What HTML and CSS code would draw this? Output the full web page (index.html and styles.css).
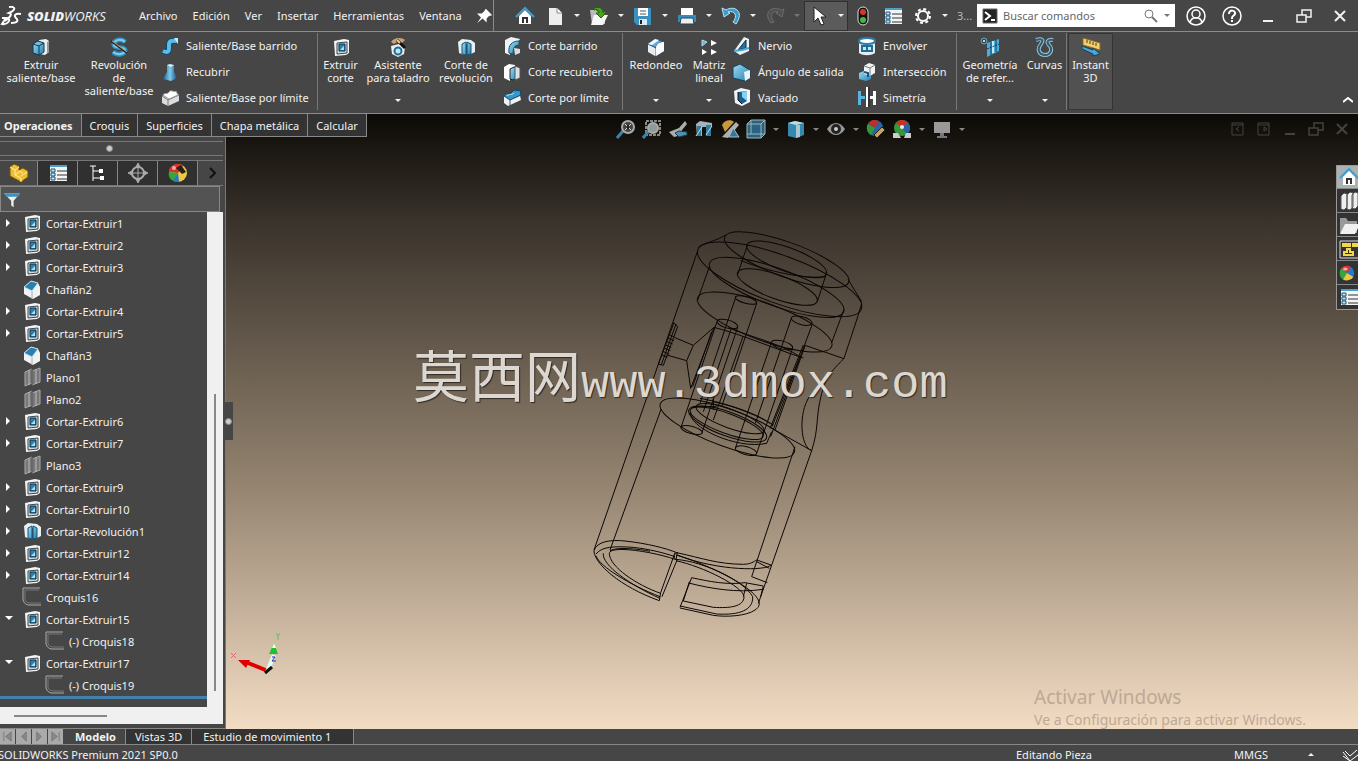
FILE: index.html
```html
<!DOCTYPE html>
<html lang="es">
<head>
<meta charset="utf-8">
<title>SOLIDWORKS Premium 2021</title>
<link rel="stylesheet" href="styles.css">
</head>
<body>
<svg class="defs" aria-hidden="true">
  <linearGradient id="blue" x1="0" y1="0" x2="1" y2="1"><stop offset="0" stop-color="#9bdcf5"/><stop offset="1" stop-color="#2583b5"/></linearGradient>
  <linearGradient id="tube"><stop offset="0" stop-color="#1c5f8a"/><stop offset=".5" stop-color="#7ccbee"/><stop offset="1" stop-color="#17547c"/></linearGradient>
  <symbol id="extrude" viewBox="0 0 20 20"><path d="M8 3l7-1 3 2v11l-4 3-5-1z" fill="#e9eef0"/><path d="M16 5v11l2-1V4z" fill="#999"/><path d="M2 7l5-3 6 2v9l-5 3-6-2z" fill="url(#blue)" stroke="#12384f"/><path d="M2 7l6 2 5-3M8 9v9" fill="none" stroke="#12384f"/></symbol>
  <symbol id="revolve" viewBox="0 0 20 20"><path d="M16 5C12 1 4 3 5 8c1 4 10 1 11 5 0 4-7 6-12 2" fill="none" stroke="#2f8fc2" stroke-width="5"/><path d="M16 5C12 1 4 3 5 8c1 4 10 1 11 5 0 4-7 6-12 2" fill="none" stroke="#7fcdf0" stroke-width="2"/><path d="M2 4l16 12" stroke="#222" stroke-width="2"/><path d="M3 4l15 11" stroke="#c99b67"/></symbol>
  <symbol id="sweep" viewBox="0 0 20 20"><path d="M3 15c7 3 6-2 6-6s2-5 8-4" fill="none" stroke="#0e4a70" stroke-width="6"/><path d="M3 15c7 3 6-2 6-6s2-5 8-4" fill="none" stroke="#5cbce8" stroke-width="4"/><path d="M14 2h4v6" fill="#c4ecfb"/></symbol>
  <symbol id="loft" viewBox="0 0 20 20"><path d="M7 3h7v7l3 6-6 3-8-2 4-7z" fill="url(#tube)"/><path d="M7 3l3-1 4 1-3 2z" fill="#d5f1fc"/></symbol>
  <symbol id="boundary" viewBox="0 0 20 20"><path d="M2 9l11-5 6 4v6L8 19l-6-3z" fill="#ddd"/><path d="M2 9l6 4 11-5M8 13v6" fill="none" stroke="#777"/><path d="M3 8c2-3 4 0 6-3s5 1 7-1l2 4-9 4z" fill="#fff" stroke="#999"/></symbol>
  <symbol id="cutext" viewBox="0 0 20 20"><path d="M3 4l10-2 5 1v13l-3 2-11 1z" fill="#f1f4f5"/><path d="M6 6l10-1v11L6 17z" fill="#d3dadd" stroke="#39464d"/><path d="M8 7h6v7H8z" fill="#2d80ad" stroke="#0c3047"/><path d="M9 13l4-4v4z" fill="#a9e2f8"/></symbol>
  <symbol id="wizard" viewBox="0 0 20 20"><path d="M3 9l8-2 6 3-1 7-6 3-6-3z" fill="#eef1f2"/><circle cx="10" cy="14" r="3.500" fill="#b9e7f8" stroke="#1f6d99" stroke-width="2"/><path d="M3 5c3-5 11-5 14-2l-3 3c-3-2-6-1-8 1z" fill="#c9a083"/><path d="M9 3l8 8" stroke="#111" stroke-width="3"/><path d="M9 3l3 3" stroke="#e8d18c" stroke-width="2"/></symbol>
  <symbol id="cutrev" viewBox="0 0 20 20"><path d="M2 5l4-3 9 1 4 3v9l-4 2V8l-4-1-3 1v10l-5-2z" fill="#e9f0f2"/><path d="M6 7l4-2v13l-4-1zM11 5l4 2v10l-4 1z" fill="url(#blue)" stroke="#155377"/></symbol>
  <symbol id="cutsweep" viewBox="0 0 20 20"><path d="M3 4l6-3 9 2-2 3-8 5v8l-5-2z" fill="#eef2f4"/><path d="M7 17C6 9 10 5 17 5v4c-5 0-6 4-6 9z" fill="url(#blue)" stroke="#17547c"/><path d="M12 12l6 1v4l-5 2z" fill="#d8dee0"/></symbol>
  <symbol id="cutloft" viewBox="0 0 20 20"><path d="M2 5l5-3 6 1v3L8 8v11l-6-3z" fill="#fff"/><path d="M8 7l4-2 4 1v9l-5 3-3-1z" fill="url(#blue)" stroke="#222"/><path d="M13 4l5 2v10l-5 2z" fill="#dce3e5" stroke="#555"/></symbol>
  <symbol id="cutbound" viewBox="0 0 20 20"><path d="M2 9l15-5 2 9L6 19l-4-3z" fill="#edf4f7"/><path d="M2 9c3-5 5 0 8-4s5 0 8-2l1 5L8 13z" fill="#3796c9" stroke="#134563"/><path d="M5 9c3-3 4 0 7-3" fill="none" stroke="#bfe8f8"/><path d="M8 13v6" stroke="#456"/></symbol>
  <symbol id="fillet" viewBox="0 0 20 20"><path d="M2 7l7-5 9 3v9l-9 5-7-4z" fill="#e9eced"/><path d="M2 7l8 3v9" fill="none" stroke="#667"/><path d="M10 11c0-4 4-6 8-6l-9-3-7 5z" fill="url(#blue)" stroke="#1b5a80"/><path d="M2 7l7-5 4 1-7 5z" fill="#f6f8f9"/><path d="M10 11c0-4 4-6 8-6v9l-8 5z" fill="#f9fbfc"/></symbol>
  <symbol id="pattern" viewBox="0 0 20 20"><path d="M3 3l5 2-5 4z" fill="#62b8e3" stroke="#b9d8e6"/><path d="M12 3l6 3-6 3zM3 12l5 3-5 3zM12 12l6 3-6 3z" fill="#fff"/></symbol>
  <symbol id="rib" viewBox="0 0 20 20"><path d="M2 15L12 1l5 2v12l-9 4z" fill="#e8f3f8"/><path d="M6 14l8-10v8z" fill="#286f99" stroke="#0f3348"/><path d="M2 15l8-1 7-2" fill="none" stroke="#4ba7d6" stroke-width="2"/></symbol>
  <symbol id="draft" viewBox="0 0 20 20"><path d="M1 5l7-3 10 6v8l-5 3-12-3z" fill="url(#blue)" stroke="#183f55"/><path d="M12 10l6-2v8l-5 3z" fill="#edf2f4"/></symbol>
  <symbol id="shell" viewBox="0 0 20 20"><path d="M2 4l7-3 9 2v12l-8 4-7-3z" fill="#f1f5f7"/><path d="M6 5l9-1v10l-5 3-4-4z" fill="#1a5f89"/><path d="M10 5l5-1v10l-5-4z" fill="#84d1f2"/><path d="M6 5v8l4 4" fill="none" stroke="#111"/></symbol>
  <symbol id="wrap" viewBox="0 0 20 20"><path d="M2 5v12c4 3 12 3 16 0V5z" fill="#e4eef2"/><ellipse cx="10" cy="5" rx="8" ry="3" fill="#fff" stroke="#2d7da7" stroke-width="2"/><path d="M5 10h10v5H5zM10 10v5" fill="#c4eafa" stroke="#206d98" stroke-width="2"/></symbol>
  <symbol id="intersect" viewBox="0 0 20 20"><path d="M2 11l5-2 7 3v5l-5 2-7-2z" fill="url(#blue)"/><path d="M7 4l5-3 6 2v8l-5 3-6-2z" fill="#f3f4f4"/><path d="M7 4l6 2 5-3M13 6v8" stroke="#777" fill="none"/><path d="M7 10l4 1v4" fill="none" stroke="#185378" stroke-width="2"/></symbol>
  <symbol id="mirror" viewBox="0 0 20 20"><path d="M1 4h3v5h4v3H4v6H1z" fill="#58b3e0"/><path d="M10 0v20" stroke="#fff" stroke-width="2"/><path d="M12 0v20" stroke="#222"/><path d="M19 4h-3v5h-3v3h3v6h3z" fill="#fff"/></symbol>
  <symbol id="geometry" viewBox="0 0 20 20"><circle cx="4" cy="4" r="3" fill="none" stroke="#56acd6"/><circle cx="4" cy="4" r="1" fill="#fff"/><path d="M7 6l12-4v12L7 20z" fill="#4aaee0"/><path d="M11 5v13M16 3v12" stroke="#173b50"/><path d="M13 4v12" stroke="#bfeaff" stroke-width="2"/><path d="M7 12l12-5" stroke="#173b50" stroke-dasharray="2 1"/></symbol>
  <symbol id="curves" viewBox="0 0 20 20"><path d="M1 3c6-2 8 0 5 4-5 6-1 11 4 11 6 0 8-6 4-10-3-3-1-6 4-5" fill="none" stroke="#8fc2da" stroke-width="4"/><path d="M1 3c6-2 8 0 5 4-5 6-1 11 4 11 6 0 8-6 4-10-3-3-1-6 4-5" fill="none" stroke="#38596a" stroke-width="2"/></symbol>
  <symbol id="ruler" viewBox="0 0 20 20"><path d="M2 1l17 5v7L2 8z" fill="#f3cf72" stroke="#8b6d25"/><path d="M6 3v3M9 4v3M12 5v3M15 6v3" stroke="#4c3a10"/><path d="M1 9l11 4v-2l7 6-7 2v-2L1 12z" fill="#4aa5d8" stroke="#17405c"/></symbol>
  <symbol id="home" viewBox="0 0 20 20"><path d="M4 10v8h12v-8l-6-6z" fill="#fff"/><path d="M1 11l9-9 9 9" fill="none" stroke="#3f9fd0" stroke-width="2"/><path d="M8 17v-5h4v5" fill="none" stroke="#333" stroke-width="2"/></symbol>
  <symbol id="new" viewBox="0 0 20 20"><path d="M4 2h8l5 5v12H4z" fill="#eee"/><path d="M12 2v5h5" fill="#fff" stroke="#888"/></symbol>
  <symbol id="open" viewBox="0 0 20 20"><path d="M1 4h6l2 2h7v12H3z" fill="#bbb"/><path d="M5 9h14l-5 10H2z" fill="#f8f8f8"/><path d="M5 2c6-2 9 1 9 5h3l-5 5-5-5h3C10 4 8 3 5 4z" fill="#46a51a" stroke="#206509"/></symbol>
  <symbol id="save" viewBox="0 0 20 20"><path d="M1 2h17v17H4l-3-3z" fill="#3c90bd"/><path d="M5 2h10v8H5z" fill="#fff"/><path d="M7 5h6M7 8h6" stroke="#555"/><path d="M6 13h8v6H6z" fill="#d8ecf5"/><path d="M8 14v4" stroke="#222" stroke-width="2"/></symbol>
  <symbol id="print" viewBox="0 0 20 20"><path d="M4 2h12v7H4z" fill="#fff"/><path d="M1 9h18v7H1z" fill="#328cbf"/><path d="M4 12h12l1 6H3z" fill="#eee" stroke="#26465a"/></symbol>
  <symbol id="undo" viewBox="0 0 20 20"><path d="M1 2l2 9 6-4-2-1c7-2 10 4 5 10l3 2C24 5 13-1 5 4z" fill="#3d9acb" stroke="#b8e4f7"/></symbol>
  <symbol id="redo" viewBox="0 0 20 20"><path d="M19 3l-2 8-6-4 2-1C7 4 4 10 9 16l-3 1C-3 6 8-1 16 4z" fill="#515151" stroke="#6c6c6c"/></symbol>
  <symbol id="cursor" viewBox="0 0 20 20"><path d="M5 1v15l4-4 3 7 3-1-3-7h5z" fill="#fff" stroke="#222"/></symbol>
  <symbol id="light" viewBox="0 0 20 20"><rect x="5" y="1" width="10" height="18" rx="5" fill="#111" stroke="#ddd"/><circle cx="10" cy="6" r="3" fill="#d7352d"/><circle cx="10" cy="14" r="3" fill="#43b943"/></symbol>
  <symbol id="props" viewBox="0 0 20 20"><path d="M2 2h17v16H2z" fill="#f4f4f4"/><path d="M2 3h17" stroke="#4c9fc9" stroke-width="2"/><path d="M9 8h10M9 12h10M9 16h10" stroke="#333"/><path d="M3 6h4v3H3zM3 10h4v3H3zM3 14h4v3H3z" fill="#bfe8fa" stroke="#1a5577"/></symbol>
  <symbol id="gear" viewBox="0 0 20 20"><circle cx="10" cy="10" r="5" fill="none" stroke="#fff" stroke-width="2"/><circle cx="10" cy="10" r="7" fill="none" stroke="#fff" stroke-width="2" stroke-dasharray="3 2.500"/></symbol>
  <symbol id="pin" viewBox="0 0 20 20"><path d="M11 1l8 8-4 1-3 3v5l-5-5-7 6 5-7-5-5h6l3-3z" fill="#fff"/></symbol>
  <symbol id="user" viewBox="0 0 20 20"><g fill="none" stroke="#fff" stroke-width="1.500"><circle cx="10" cy="10" r="9"/><circle cx="10" cy="8" r="4"/><path d="M4 17c1-7 11-7 12 0"/></g></symbol>
  <symbol id="help" viewBox="0 0 20 20"><g fill="none" stroke="#fff"><circle cx="10" cy="10" r="9" stroke-width="1.500"/><path d="M7 8c0-5 7-4 6 0-1 2-3 2-3 4v1M10 14v2" stroke-width="2"/></g></symbol>
  <symbol id="min" viewBox="0 0 20 20"><path d="M5 15h10" stroke="currentColor" stroke-width="2"/></symbol>
  <symbol id="restore" viewBox="0 0 20 20"><path d="M3 9h9v7H3zM8 9V4h9v7h-5M3 9h9" fill="none" stroke="currentColor" stroke-width="1.500"/></symbol>
  <symbol id="close" viewBox="0 0 20 20"><path d="M5 5l10 10M15 5L5 15" stroke="currentColor" stroke-width="2"/></symbol>
  <symbol id="dockl" viewBox="0 0 20 20"><path d="M4 4h11v12H4zM4 6h11M11 8l-3 2 3 2" fill="none" stroke="currentColor"/></symbol>
  <symbol id="dockr" viewBox="0 0 20 20"><path d="M4 4h11v12H4zM4 6h11M10 8l3 2-3 2z" fill="none" stroke="currentColor"/></symbol>
  <symbol id="zoomfit" viewBox="0 0 20 20"><path d="M1 19l6-7" stroke="#3d82a8" stroke-width="3"/><circle cx="12" cy="8" r="6" fill="#444" stroke="#aaa" stroke-width="2"/><path d="M9 5l6 6M9 11l6-6" stroke="#ddd"/><path d="M11 6h2v4h-2z" fill="#222"/></symbol>
  <symbol id="zoomarea" viewBox="0 0 20 20"><path d="M4 2h14v14H4z" fill="none" stroke="#888" stroke-width="2" stroke-dasharray="3 1"/><path d="M1 19l6-7" stroke="#3d82a8" stroke-width="3"/><circle cx="11" cy="9" r="5" fill="#909a9a" stroke="#aaa" stroke-width="2"/></symbol>
  <symbol id="prev" viewBox="0 0 20 20"><path d="M1 13l10-4 6-7 2 3-5 6v5l-8 2z" fill="#a9aeae"/><path d="M7 14l4-2 8 1v3l-8 2z" fill="#4c93b3" stroke="#234"/></symbol>
  <symbol id="section" viewBox="0 0 20 20"><path d="M2 5l4-3 12 2v4H8v9H3z" fill="#a7b2b5"/><path d="M3 7h4v10H3zM12 6h5v11h-5z" fill="#2c7da5"/><path d="M2 17L8 8M12 16l6-9" stroke="#bce2ef"/></symbol>
  <symbol id="dynamic" viewBox="0 0 20 20"><path d="M2 6c2-5 9-6 12-3L5 13z" fill="#c9983a"/><path d="M2 18L16 3l3 3-11 13z" fill="#b0b0b0"/><path d="M9 18l4-9 6 9z" fill="#36779a" stroke="#abc"/></symbol>
  <symbol id="viewcube" viewBox="0 0 20 20"><path d="M1 5l4-4h14v14l-4 4H1z" fill="#29637f" stroke="#9db6bd"/><path d="M1 5h14v14M15 5l4-4M5 1v14H1M5 15h14" fill="none" stroke="#9db6bd"/></symbol>
  <symbol id="display" viewBox="0 0 20 20"><path d="M2 4l7-2 9 2v12l-8 3-8-2z" fill="#3788ae"/><path d="M2 4l8 2 8-2-9-2z" fill="#bdd"/><path d="M10 6h4v12l-4 1z" fill="#a9c6d0"/></symbol>
  <symbol id="eye" viewBox="0 0 20 20"><path d="M1 10c5-8 13-8 18 0-5 8-13 8-18 0z" fill="#999"/><circle cx="10" cy="10" r="5" fill="#222"/><circle cx="10" cy="10" r="2" fill="#ccc"/></symbol>
  <symbol id="ball" viewBox="0 0 20 20"><circle cx="10" cy="10" r="9" fill="#2478cf"/><path d="M10 10L3 4C6 0 12 0 15 3z" fill="#d8322d"/><path d="M10 10L3 4c-4 5-2 11 2 14z" fill="#35a63a"/><path d="M10 10l-5 8c5 3 11 0 13-3z" fill="#edc840"/><ellipse cx="8" cy="5" rx="3" ry="2" fill="#fff" opacity=".6"/></symbol>
  <symbol id="ballpen" viewBox="0 0 20 20"><circle cx="9" cy="9" r="8" fill="#2565a8"/><path d="M9 9L2 5C4 0 11 0 13 3z" fill="#b92f2b"/><path d="M9 9L2 5c-3 4 0 10 3 11z" fill="#35963a"/><path d="M8 16l8-8 3 3-8 8z" fill="#c9a552" stroke="#222"/></symbol>
  <symbol id="ballscene" viewBox="0 0 20 20"><circle cx="10" cy="9" r="8" fill="#35963a"/><path d="M10 9L4 4c3-4 9-4 12 0z" fill="#c9302b"/><path d="M10 9l6-5c3 4 2 9-1 11z" fill="#2565a8"/><path d="M1 14h5l3 5H1zM12 19l2-5h5v5z" fill="#ccc"/><circle cx="10" cy="8" r="2" fill="#eee"/></symbol>
  <symbol id="balltab" viewBox="0 0 20 20"><circle cx="10" cy="10" r="9" fill="#edc840"/><path d="M10 10L1 9C1 1 11-1 15 3z" fill="#d8322d"/><path d="M10 10L1 9c-1 4 1 8 5 9z" fill="#35a63a"/><path d="M10 10l-5 8c2 1 4 1 6 1z" fill="#2478cf"/><path d="M8 5l5-3 5 7-4 2z" fill="#222"/><ellipse cx="6" cy="5" rx="2" ry="2" fill="#fff" opacity=".6"/></symbol>
  <symbol id="monitor" viewBox="0 0 20 20"><path d="M2 3h16v11H2z" fill="#999"/><path d="M8 14h4v3h3v2H5v-2h3z" fill="#777"/></symbol>
  <symbol id="part" viewBox="0 0 20 20"><path d="M1 4l4-3 5 2v4l4-2 5 3v6l-7 5L1 13z" fill="#efbd32" stroke="#74530a"/><path d="M1 4l5 3 4-3M6 7v5l6 3v4M6 12l4-3M12 13l6-4M10 8l4 2" fill="none" stroke="#fff0a5"/></symbol>
  <symbol id="treecfg" viewBox="0 0 20 20"><path d="M5 3v15M2 3h6M5 8h8M5 15h7" fill="none" stroke="#fff"/><path d="M11 6h4v4h-4zM12 13h4v4h-4z" fill="#fff"/></symbol>
  <symbol id="target" viewBox="0 0 20 20"><circle cx="10" cy="10" r="6" fill="none" stroke="#aaa" stroke-width="2"/><path d="M10 0l2 4H8zM20 10l-4 2V8zM10 20l-2-4h4zM0 10l4-2v4zM10 2v16M2 10h16" fill="#aaa" stroke="#aaa"/></symbol>
  <symbol id="filter" viewBox="0 0 20 20"><path d="M0 2h20l-8 9v8l-3-2v-6z" fill="#eee"/><path d="M0 2h20l-3 4H3z" fill="#3994bd"/></symbol>
  <symbol id="chamfer" viewBox="0 0 20 20"><path d="M2 8l7-6 7 2 2 4v8l-7 4-9-5z" fill="#f0f2f3"/><path d="M2 8l7-6 7 2-6 8z" fill="#2c7fac" stroke="#c2e3f0"/><path d="M10 12v8" stroke="#aaa"/></symbol>
  <symbol id="plane" viewBox="0 0 20 20"><path d="M3 5l7-3v14l-7 3zM10 4l8-3v14l-8 3z" fill="#777" stroke="#aaa"/><path d="M7 3v15M14 2v15" stroke="#bbb"/><path d="M10 2v16" stroke="#333"/></symbol>
  <symbol id="sketch" viewBox="0 0 20 20"><path d="M18 1H1v12c1 3 3 5 6 5h12" fill="none" stroke="#aaa"/><path d="M17 3H3v10c1 2 3 3 6 3h10" fill="none" stroke="#777"/></symbol>
  <symbol id="library" viewBox="0 0 20 20"><path d="M2 5l3-3 3 1v13l-3 3-3-1zM8 4l3-3 3 1v14l-3 3-3-1zM13 4l3-3 3 1v13l-3 3-3-1z" fill="#eee" stroke="#555"/></symbol>
  <symbol id="folder" viewBox="0 0 20 20"><path d="M1 3h6l2 3h9v12H1z" fill="#999"/><path d="M6 9h15l-5 10H1z" fill="#f0f0f0"/></symbol>
  <symbol id="palette" viewBox="0 0 20 20"><path d="M1 2h20v17H1z" fill="#333" stroke="#ddd"/><path d="M4 5h7v2H4zM14 5h4v2h-4zM8 10h3v3h3v3H5v-3h3z" fill="#333" stroke="#f1d848" stroke-width="2"/></symbol>
</svg>

<header class="titlebar">
  <div class="brand">
    <svg class="brand-mark" viewBox="0 0 22 20"><path d="M9 1c7-1 7 3 0 6 4 1 1 4-4 8M2 12h5c5 1 1 7-5 6l4-6M21 8c-5-1-8 1-5 4s1 5-5 5" fill="none" stroke="#fff" stroke-width="2"/></svg>
    <span><b>SOLID</b>WORKS</span>
  </div>
  <nav class="menu"><button>Archivo</button><button>Edición</button><button>Ver</button><button>Insertar</button><button>Herramientas</button><button>Ventana</button><button class="pin" aria-label="Fijar"><svg class="i16"><use href="#pin"/></svg></button></nav>
  <div class="quick">
    <button class="cell"><svg class="i20"><use href="#home"/></svg></button>
    <button class="pair"><svg class="i20"><use href="#new"/></svg><i class="arrow"></i></button>
    <button class="pair"><svg class="i20"><use href="#open"/></svg><i class="arrow"></i></button>
    <button class="pair"><svg class="i20"><use href="#save"/></svg><i class="arrow"></i></button>
    <button class="pair"><svg class="i20"><use href="#print"/></svg><i class="arrow"></i></button>
    <button class="pair"><svg class="i20"><use href="#undo"/></svg><i class="arrow"></i></button>
    <button class="pair dim"><svg class="i20"><use href="#redo"/></svg><i class="arrow"></i></button>
    <button class="pair pressed"><svg class="i20"><use href="#cursor"/></svg><i class="arrow"></i></button>
    <button class="cell"><svg class="i20"><use href="#light"/></svg></button>
    <button class="cell"><svg class="i20"><use href="#props"/></svg></button>
    <button class="pair"><svg class="i20"><use href="#gear"/></svg><i class="arrow"></i></button>
    <span class="doc">3...</span>
  </div>
  <label class="search"><svg class="i16" viewBox="0 0 16 16"><path d="M1 1h14v14H1z" fill="#222" stroke="#666"/><path d="M3 4l5 4-5 4M9 12h4" fill="none" stroke="#fff" stroke-width="2"/></svg><input type="text" placeholder="Buscar comandos" aria-label="Buscar comandos"><svg class="i16" viewBox="0 0 16 16"><circle cx="6" cy="6" r="4" fill="none" stroke="#777"/><path d="M9 9l5 5" stroke="#777" stroke-width="2"/></svg><i class="arrow gray"></i></label>
  <div class="winbtns"><button><svg class="i20"><use href="#user"/></svg></button><button><svg class="i20"><use href="#help"/></svg></button><button><svg class="i20"><use href="#min"/></svg></button><button><svg class="i20"><use href="#restore"/></svg></button><button><svg class="i20"><use href="#close"/></svg></button></div>
</header>

<section class="ribbon">
  <div class="group">
    <button class="big w82"><svg class="i20"><use href="#extrude"/></svg><span>Extruir<br>saliente/base</span></button>
    <button class="big w74"><svg class="i20"><use href="#revolve"/></svg><span>Revolución<br>de<br>saliente/base</span></button>
    <div class="smalls w161"><button><svg class="i20"><use href="#sweep"/></svg>Saliente/Base barrido</button><button><svg class="i20"><use href="#loft"/></svg>Recubrir</button><button><svg class="i20"><use href="#boundary"/></svg>Saliente/Base por límite</button></div>
  </div>
  <div class="group">
    <button class="big w45"><svg class="i20"><use href="#cutext"/></svg><span>Extruir<br>corte</span></button>
    <button class="big w70"><svg class="i20"><use href="#wizard"/></svg><span>Asistente<br>para taladro</span><i class="arrow"></i></button>
    <button class="big w66"><svg class="i20"><use href="#cutrev"/></svg><span>Corte de<br>revolución</span></button>
    <div class="smalls snug w123"><button><svg class="i20"><use href="#cutsweep"/></svg>Corte barrido</button><button><svg class="i20"><use href="#cutloft"/></svg>Corte recubierto</button><button><svg class="i20"><use href="#cutbound"/></svg>Corte por límite</button></div>
  </div>
  <div class="group">
    <button class="big w66"><svg class="i20"><use href="#fillet"/></svg><span>Redondeo</span><i class="arrow"></i></button>
    <button class="big w40"><svg class="i20"><use href="#pattern"/></svg><span>Matriz<br>lineal</span><i class="arrow"></i></button>
    <div class="smalls snug w124"><button><svg class="i20"><use href="#rib"/></svg>Nervio</button><button><svg class="i20"><use href="#draft"/></svg>Ángulo de salida</button><button><svg class="i20"><use href="#shell"/></svg>Vaciado</button></div>
    <div class="smalls w103"><button><svg class="i20"><use href="#wrap"/></svg>Envolver</button><button><svg class="i20"><use href="#intersect"/></svg>Intersección</button><button><svg class="i20"><use href="#mirror"/></svg>Simetría</button></div>
  </div>
  <div class="group">
    <button class="big w66"><svg class="i20"><use href="#geometry"/></svg><span>Geometría<br>de refer...</span><i class="arrow"></i></button>
    <button class="big w43"><svg class="i20"><use href="#curves"/></svg><span>Curvas</span><i class="arrow"></i></button>
  </div>
  <button class="big w45 active"><svg class="i20"><use href="#ruler"/></svg><span>Instant<br>3D</span></button>
  <button class="collapse" aria-label="Contraer"><svg viewBox="0 0 10 6"><path d="M0 5l5-4 5 4" fill="none" stroke="#fff" stroke-width="2"/></svg></button>
</section>

<main class="work">
  <section class="viewport">
    <div class="hud">
      <button><svg class="i20"><use href="#zoomfit"/></svg></button><button><svg class="i20"><use href="#zoomarea"/></svg></button><button><svg class="i20"><use href="#prev"/></svg></button><button><svg class="i20"><use href="#section"/></svg></button><button><svg class="i20"><use href="#dynamic"/></svg></button>
      <button class="drop"><svg class="i20"><use href="#viewcube"/></svg><i class="arrow"></i></button><button class="drop"><svg class="i20"><use href="#display"/></svg><i class="arrow"></i></button><button class="drop"><svg class="i20"><use href="#eye"/></svg><i class="arrow"></i></button>
      <button><svg class="i20"><use href="#ballpen"/></svg></button><button class="drop"><svg class="i20"><use href="#ballscene"/></svg><i class="arrow"></i></button><button class="drop"><svg class="i20"><use href="#monitor"/></svg><i class="arrow"></i></button>
    </div>
    <div class="docbtns"><button><svg class="i20"><use href="#dockl"/></svg></button><button><svg class="i20"><use href="#dockr"/></svg></button><button><svg class="i20"><use href="#min"/></svg></button><button><svg class="i20"><use href="#restore"/></svg></button><button><svg class="i20"><use href="#close"/></svg></button></div>

    <svg class="model" viewBox="0 0 930 1230" role="img" aria-label="Modelo alámbrico">
      <ellipse cx="650" cy="119" rx="198" ry="52" transform="rotate(20 650 119)"/>
      <ellipse cx="629" cy="178" rx="261" ry="72" transform="rotate(20 629 178)"/>
      <ellipse cx="620" cy="202" rx="214" ry="56" transform="rotate(20 620 202)"/>
      <ellipse cx="584" cy="306" rx="214" ry="56" transform="rotate(20 584 306)"/>
      <ellipse cx="650" cy="118" rx="127" ry="36" transform="rotate(20 650 118)"/>
      <ellipse cx="622" cy="201" rx="127" ry="36" transform="rotate(20 622 201)"/>
      <ellipse cx="472" cy="624" rx="214" ry="56" transform="rotate(20 472 624)"/>
      <ellipse cx="473" cy="612" rx="124" ry="36" transform="rotate(20 473 612)"/>
      <ellipse cx="470" cy="610" rx="116" ry="30" transform="rotate(20 470 610)"/>
      <ellipse cx="480" cy="596" rx="108" ry="28" transform="rotate(20 480 596)"/>
      <path d="M385 82C400 70 440 62 465 46M834 178L875 245M418 140L383 240M822 268L785 368M532 76L502 166M770 158L742 245M512 122C600 155 700 178 768 170"/>
      <path d="M382 95L72 990M875 250L860 300 822 415M822 415C800 440 770 460 755 520 735 600 748 620 725 692L565 1150M273 568L120 990M675 680L545 1070"/>
      <ellipse cx="528" cy="240" rx="33" ry="10" transform="rotate(15 528 240)"/><ellipse cx="472" cy="312" rx="32" ry="12" transform="rotate(15 472 312)"/><ellipse cx="695" cy="302" rx="32" ry="12" transform="rotate(15 695 302)"/><ellipse cx="636" cy="375" rx="33" ry="12" transform="rotate(15 636 375)"/><ellipse cx="365" cy="630" rx="33" ry="11" transform="rotate(15 365 630)"/><ellipse cx="528" cy="692" rx="33" ry="12" transform="rotate(15 528 692)"/>
      <path d="M497 232L390 550M560 250L455 560M441 305L333 622M503 322L396 638M664 295L556 610M727 312L602 650M604 368L496 685M668 384L560 700M484 325L400 575M519 350L430 600M700 375L600 625M690 410L606 620M705 378L615 630"/>
      <path d="M312 308L323 320 280 436 265 432ZM318 312L274 434M300 345L314 352M295 355L312 362M291 365L308 372M287 375L304 382M284 385L301 392M280 395L298 402M276 405L293 412M315 353L370 376 350 422 290 405M370 376L432 322M350 422L362 505 432 322M425 335L368 500"/>
      <path d="M432 322C520 345 610 385 700 414M475 323C540 350 630 370 690 410M705 376L822 416M775 465L718 530C685 580 690 680 725 692M600 622L725 692M390 535C470 550 560 580 600 610M430 545C500 560 570 590 610 615M362 575C350 620 500 690 590 670L605 635M430 530V570M370 560L440 560"/>
      <g transform="translate(0 630)">
        <path d="M72 362C80 335 120 328 165 333 230 340 290 355 320 368M72 362C72 400 150 470 268 512M78 372C95 350 130 348 190 352 240 358 280 368 315 380M78 378C90 410 180 465 270 500M118 370C120 345 250 365 315 388M118 370C118 410 200 465 272 490M100 370C95 405 180 465 270 505M120 362C140 350 210 357 240 364"/>
        <path d="M315 368L272 488 268 512M322 388L276 500M310 378L322 366 318 390Z"/>
        <path d="M320 368C400 385 440 402 520 403 545 402 550 395 560 390L603 405C590 422 450 425 320 375M318 388C400 395 520 450 548 500 550 540 510 556 440 552L330 528M320 375C420 405 620 500 555 540 530 558 470 562 430 556L330 534M318 392C400 410 520 470 522 500 522 530 480 535 430 532L340 513"/>
        <path d="M365 443L330 532M358 455L340 513M365 443C420 455 470 465 525 458L580 468M360 460C420 475 500 490 580 478M545 440L592 458M530 460L520 500M560 395L598 415M580 468L572 500"/>
      </g>
    </svg>
    <p class="mark"><span>莫西网</span>www.3dmox.com</p>
    <svg class="triad" viewBox="0 0 60 50"><path d="M38 39l-20-8" stroke="#e00000" stroke-width="4"/><path d="M8 28l12 0-4 8z" fill="#e00000"/><path d="M37 40l7-17" stroke="#e4fff0" stroke-width="4"/><path d="M35 41l7-6" stroke="#111" stroke-width="3"/><path d="M44 11l4 11h-9z" fill="#20c030"/><path d="M44 11l2 5h-4z" fill="#ffe"/><path d="M42 25h3l-3 4h4" fill="none" stroke="#2424d0"/><path d="M1 21l5 5M6 21l-5 5" stroke="#d66"/><path d="M46 1l2 3 2-3M48 4v4" stroke="#5fc35f" fill="none"/></svg>
    <div class="activate"><p>Activar Windows</p><p>Ve a Configuración para activar Windows.</p></div>
    <div class="taskpane"><button class="on"><svg class="i20"><use href="#home"/></svg></button><button><svg class="i20"><use href="#library"/></svg></button><button><svg class="i20"><use href="#folder"/></svg></button><button><svg class="i20"><use href="#palette"/></svg></button><button><svg class="i16"><use href="#ball"/></svg></button><button><svg class="i20"><use href="#props"/></svg></button></div>
  </section>

  <nav class="tabs"><button class="on">Operaciones</button><button>Croquis</button><button>Superficies</button><button>Chapa metálica</button><button>Calcular</button></nav>

  <aside class="panel">
    <div class="grip"><i class="dot"></i></div>
    <div class="ptabs"><button class="on"><svg class="i20"><use href="#part"/></svg></button><button><svg class="i20"><use href="#props"/></svg></button><button><svg class="i20"><use href="#treecfg"/></svg></button><button><svg class="i20"><use href="#target"/></svg></button><button><svg class="i20"><use href="#balltab"/></svg></button><button class="more"><svg viewBox="0 0 8 12"><path d="M1 1l5 5-5 5" fill="none" stroke="#111" stroke-width="2"/></svg></button></div>
    <div class="filter"><svg class="i16"><use href="#filter"/></svg></div>
    <div class="scroller">
      <ul class="tree">
        <li><i class="tw"></i><svg class="i20"><use href="#cutext"/></svg>Cortar-Extruir1</li>
        <li><i class="tw"></i><svg class="i20"><use href="#cutext"/></svg>Cortar-Extruir2</li>
        <li><i class="tw"></i><svg class="i20"><use href="#cutext"/></svg>Cortar-Extruir3</li>
        <li><i class="tw none"></i><svg class="i20"><use href="#chamfer"/></svg>Chaflán2</li>
        <li><i class="tw"></i><svg class="i20"><use href="#cutext"/></svg>Cortar-Extruir4</li>
        <li><i class="tw"></i><svg class="i20"><use href="#cutext"/></svg>Cortar-Extruir5</li>
        <li><i class="tw none"></i><svg class="i20"><use href="#chamfer"/></svg>Chaflán3</li>
        <li><i class="tw none"></i><svg class="i20"><use href="#plane"/></svg>Plano1</li>
        <li><i class="tw none"></i><svg class="i20"><use href="#plane"/></svg>Plano2</li>
        <li><i class="tw"></i><svg class="i20"><use href="#cutext"/></svg>Cortar-Extruir6</li>
        <li><i class="tw"></i><svg class="i20"><use href="#cutext"/></svg>Cortar-Extruir7</li>
        <li><i class="tw none"></i><svg class="i20"><use href="#plane"/></svg>Plano3</li>
        <li><i class="tw"></i><svg class="i20"><use href="#cutext"/></svg>Cortar-Extruir9</li>
        <li><i class="tw"></i><svg class="i20"><use href="#cutext"/></svg>Cortar-Extruir10</li>
        <li><i class="tw"></i><svg class="i20"><use href="#cutrev"/></svg>Cortar-Revolución1</li>
        <li><i class="tw"></i><svg class="i20"><use href="#cutext"/></svg>Cortar-Extruir12</li>
        <li><i class="tw"></i><svg class="i20"><use href="#cutext"/></svg>Cortar-Extruir14</li>
        <li><i class="tw none"></i><svg class="i20"><use href="#sketch"/></svg>Croquis16</li>
        <li><i class="tw open"></i><svg class="i20"><use href="#cutext"/></svg>Cortar-Extruir15</li>
        <li class="child"><i class="tw none"></i><svg class="i20"><use href="#sketch"/></svg>(-) Croquis18</li>
        <li><i class="tw open"></i><svg class="i20"><use href="#cutext"/></svg>Cortar-Extruir17</li>
        <li class="child"><i class="tw none"></i><svg class="i20"><use href="#sketch"/></svg>(-) Croquis19</li>
      </ul>
      <div class="vbar"><i></i></div>
      <div class="hbar"><i></i></div>
    </div>
    <button class="handle" aria-label="Ocultar panel"><i class="dot"></i></button>
  </aside>
</main>

<nav class="sheets">
  <div class="steps"><button><svg viewBox="0 0 12 12"><path d="M2 1v10M10 1L4 6l6 5z"/></svg></button><button><svg viewBox="0 0 12 12"><path d="M9 1L4 6l5 5z"/></svg></button><button><svg viewBox="0 0 12 12"><path d="M3 1l5 5-5 5z"/></svg></button><button><svg viewBox="0 0 12 12"><path d="M10 1v10M2 1l6 5-6 5z"/></svg></button></div>
  <button class="on">Modelo</button><button>Vistas 3D</button><button class="wide">Estudio de movimiento 1</button>
</nav>
<footer class="status"><span class="ver">SOLIDWORKS Premium 2021 SP0.0</span><span class="mode">Editando Pieza</span><button class="units">MMGS<i class="arrow up"></i></button><svg class="i16" viewBox="0 0 16 16"><path d="M1 5l7 9 8-6M3 4l5 5 7-6M1 9l7 5" fill="none" stroke="#fff"/></svg></footer>
</body>
</html>
```
FILE: styles.css
```css
* { box-sizing: border-box; }
body { margin: 0; height: 100vh; display: flex; flex-direction: column; overflow: hidden; background: #464646; color: #f2f2f2; font: 11px/13px "Noto Sans", sans-serif; }
button { border: 0; margin: 0; padding: 0; background: none; color: inherit; font: inherit; }
p, ul { margin: 0; padding: 0; }
.defs { position: absolute; width: 0; height: 0; }
.i20 { width: 20px; height: 20px; flex: none; }
.i16 { width: 16px; height: 16px; flex: none; }
.arrow { flex: none; width: 0; height: 0; border: 3px solid transparent; border-top-color: currentColor; border-bottom: 0; }
.arrow.gray { color: #777; }
.arrow.up { border-top: 0; border-bottom: 3px solid currentColor; }

.titlebar { flex: none; height: 32px; display: flex; align-items: center; border-bottom: 1px solid #8b8b8b; }
.brand { flex: none; width: 139px; display: flex; align-items: center; gap: 5px; font: italic 13px/18px "Open Sans", sans-serif; }
.brand b { font-weight: 800; }
.brand-mark { width: 22px; height: 20px; flex: none; }
.menu { flex: none; width: 355px; height: 31px; display: flex; align-items: center; gap: 15px; border-right: 1px solid #8b8b8b; white-space: nowrap; }
.menu button { display: flex; }
.quick { flex: none; width: 483px; padding-left: 16px; display: flex; align-items: center; }
.cell, .pair { height: 30px; display: flex; align-items: center; padding-left: 5px; }
.cell { width: 30px; }
.pair { width: 44px; gap: 9px; }
.dim { color: #777; }
.pressed { background: #5b5b5b; border: 1px solid #303030; padding-left: 4px; }
.doc { padding-left: 5px; color: #bbb; }
.search { flex: 0 1 198px; min-width: 0; height: 23px; display: flex; align-items: center; gap: 5px; padding: 0 5px; background: #fff; }
.search input { flex: 1; width: 0; min-width: 0; border: 0; padding: 0; outline: 0; font: inherit; color: #555; background: none; }
.search input::placeholder { color: #666; opacity: 1; }
.winbtns { flex: none; margin-left: auto; display: flex; }
.winbtns button { width: 36px; height: 30px; display: grid; place-items: center; }

.ribbon { flex: none; height: 82px; display: flex; border-bottom: 1px solid #8b8b8b; padding-top: 1px; position: relative; }
.group { display: flex; border-right: 1px solid #777; margin-bottom: 3px; }
.big { flex: none; display: flex; flex-direction: column; align-items: center; padding: 4px 0 8px; white-space: nowrap; }
.big span { margin-top: 1px; text-align: center; }
.big .arrow { margin-top: auto; }
.active { margin: 0 0 3px 1px; background: #515151; border: 1px solid #343434; padding-top: 3px; }
.smalls { display: flex; flex-direction: column; }
.smalls button { height: 26px; display: flex; align-items: center; gap: 6px; padding-left: 4px; white-space: nowrap; }
.snug button { padding-left: 3px; }
.w40 { width: 40px; } .w43 { width: 43px; } .w45 { width: 45px; } .w66 { width: 66px; } .w70 { width: 70px; } .w74 { width: 74px; }
.w82 { width: 82px; } .w103 { width: 103px; } .w123 { width: 123px; } .w124 { width: 124px; } .w161 { width: 161px; }
.collapse { position: absolute; right: 5px; bottom: 8px; width: 10px; height: 10px; }
.collapse svg { width: 10px; height: 6px; display: block; }

.work { flex: 1; min-height: 0; display: grid; grid-template: 23px minmax(0, 1fr) / 226px minmax(0, 1fr); }
.viewport { grid-area: 1 / 1 / 3 / 3; position: relative; display: flex; align-items: flex-start; justify-content: space-between; padding: 2px 3px 0 613px; background: linear-gradient(#0c0a06, #39322b 17%, #93836f 60%, #f3dcc4); overflow: hidden; }
.hud, .docbtns { display: flex; }
.hud button, .docbtns button { width: 26px; height: 26px; display: flex; align-items: center; padding-left: 3px; }
.hud .drop { width: 40px; gap: 7px; color: #888; }
.docbtns { color: #44423e; }
.model { position: absolute; left: 570px; top: 106px; width: 310px; height: 410px; fill: none; stroke: #0b0705; stroke-width: 3; }
.mark { position: absolute; left: 413px; top: 227px; font: 47px/64px "Liberation Mono", "Noto Sans CJK SC", monospace; color: #dcd8d1; text-shadow: 1px 1px 1px #302a25; white-space: nowrap; }
.mark span { font: 56px/64px "Noto Sans CJK SC", sans-serif; }
.triad { position: absolute; left: 230px; bottom: 47px; width: 60px; height: 50px; }
.activate { position: absolute; right: 52px; bottom: 0; color: #bda995; font-size: 14px; line-height: 18px; white-space: nowrap; }
.activate p:first-child { font-size: 19px; line-height: 28px; }
.taskpane { position: absolute; right: 0; top: 51px; width: 22px; border: 1px solid #999; border-right: 0; background: #333; }
.taskpane button { width: 21px; height: 24px; display: flex; align-items: center; padding-left: 2px; border-bottom: 1px solid #888; overflow: hidden; }
.taskpane button:last-child { border-bottom: 0; }
.taskpane .on { background: #aab2b4; height: 23px; }

.tabs { grid-area: 1 / 1 / 2 / 3; justify-self: start; display: flex; position: relative; border-bottom: 1px solid #888; }
.tabs button { padding: 0 8px; background: #333; border-right: 1px solid #888; white-space: nowrap; }
.tabs .on { background: #464646; padding: 0 8px 0 4px; font-weight: 700; }

.panel { grid-area: 2 / 1; position: relative; display: flex; flex-direction: column; background: #464646; padding-right: 2px; padding-bottom: 4px; border-bottom: 1px solid #888; border-right: 1px solid #777; }
.grip { flex: none; margin-top: 4px; border: 1px solid #777; border-width: 1px 0; height: 15px; display: grid; place-items: center; }
.dot { width: 7px; height: 7px; border-radius: 50%; background: #ccc; border: 1px solid #888; }
.grip .dot { margin-right: 4px; }
.ptabs { flex: none; height: 26px; margin-top: 4px; display: flex; border-top: 1px solid #777; border-bottom: 1px solid #777; }
.ptabs button { flex: none; width: 40px; display: grid; place-items: center; background: #303030; border-right: 1px solid #888; }
.ptabs .on { width: 38px; background: #464646; }
.ptabs .more { flex: 1; background: #464646; border: 0; padding-left: 4px; }
.more svg { width: 8px; height: 12px; }
.filter { flex: none; height: 26px; margin-right: 3px; border: 1px solid #888; background: #535353; padding: 5px 3px; }
.scroller { flex: 1; min-height: 0; display: grid; grid-template: minmax(0, 1fr) 17px / minmax(0, 1fr) 16px; background: #f0f0f0; }
.tree { list-style: none; background: #464646; overflow: hidden; }
.tree::after { content: ""; display: block; height: 3px; background: #4381aa; }
.tree li { height: 22px; display: flex; align-items: center; padding-left: 5px; gap: 5px; white-space: nowrap; }
.tree .i20 { margin-right: -1px; }
.tree .child { padding-left: 28px; }
.tw { width: 12px; height: 8px; }
.tw::before { content: ""; display: block; width: 5px; height: 8px; background: #fff; clip-path: polygon(20% 0, 100% 50%, 20% 100%); }
.tw.none::before { display: none; }
.tw.open::before { width: 8px; height: 4px; margin-top: 1px; clip-path: polygon(0 0, 100% 0, 50% 100%); }
.vbar { display: flex; justify-content: center; align-items: flex-end; padding-bottom: 16px; }
.vbar i { width: 2px; height: 62%; background: #888; }
.hbar { padding: 8px 14px; }
.hbar i { display: block; width: 93px; height: 2px; background: #888; }
.handle { position: absolute; right: -8px; top: 265px; width: 9px; height: 38px; background: #464646; display: grid; place-items: center; }

.sheets { flex: none; height: 16px; display: flex; border-bottom: 1px solid #888; }
.sheets > button { padding: 0 9px; background: #333; border-right: 1px solid #888; line-height: 14px; }
.sheets .on { background: #464646; font-weight: 700; padding: 0 9px 0 12px; }
.sheets .wide { padding: 0 22px 0 11px; }
.steps { display: flex; width: 63px; gap: 1px; }
.steps button { width: 15px; background: #aaa; display: grid; place-items: center; }
.steps svg { width: 11px; height: 11px; fill: #888; stroke: #777; }
.status { flex: none; height: 16px; display: flex; align-items: center; line-height: 16px; padding-top: 3px; white-space: nowrap; }
.ver { flex: 1; margin-left: -2px; }
.mode { width: 218px; }
.units { width: 108px; display: flex; align-items: center; gap: 40px; }
```
